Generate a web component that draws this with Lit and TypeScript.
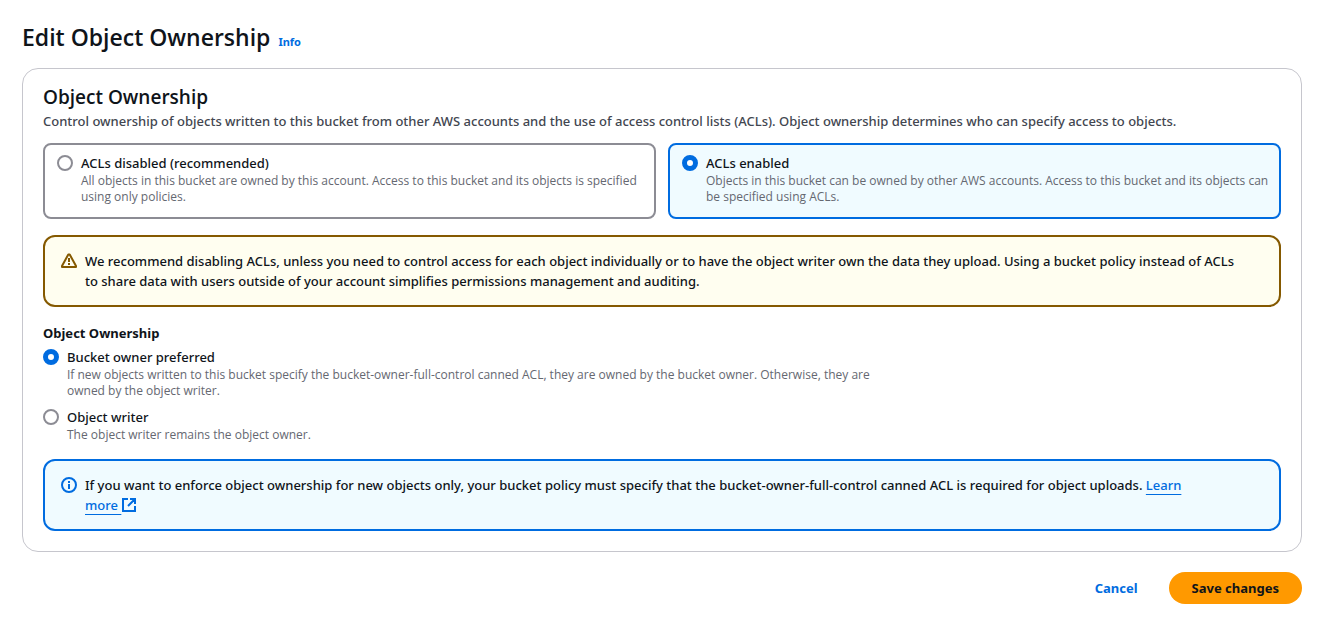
import { LitElement, html, css } from "lit";
import { customElement, state } from "lit/decorators.js";

@customElement("app-root")
class AppRoot extends LitElement {
  @state() private acl = "enabled";
  @state() private owner = "bucket";

  static styles = css`
    :host { display: block; font-family: "Noto Sans", "Open Sans", sans-serif; font-size: 13px; line-height: 20px; color: #0f141a; font-weight: 500; }
    * { box-sizing: border-box; }
    form { padding: 22px 37px 24px 22px; }
    .page-head { display: flex; align-items: baseline; gap: 8px; margin-bottom: 16px; }
    h1 { margin: 0; font-family: "Open Sans", sans-serif; font-size: 23px; line-height: 30px; font-weight: 600; }
    .info { font-size: 11px; line-height: 16px; font-weight: 700; color: #006ce0; text-decoration: none; }
    .card { border: 1px solid #c6c6cd; border-radius: 16px; padding: 16px 20px 20px; }
    h2 { margin: 0; font-family: "Open Sans", sans-serif; font-size: 19px; line-height: 24px; font-weight: 600; }
    .lead { margin: 2px 0 12px; color: #424650; }
    .tiles { display: grid; grid-template-columns: 1fr 1fr; gap: 12px; margin-bottom: 16px; }
    .tile { border: 2px solid #8c8c94; border-radius: 8px; padding: 8px 8px 12px 12px; }
    .tile.on { border-color: #006ce0; background: #f0fbff; }
    .choice { display: flex; gap: 8px; }
    input { appearance: none; flex: none; width: 16px; height: 16px; margin: 2px 0; border: 2px solid #8c8c94; border-radius: 50%; background: #fff; }
    input:checked { border: 5px solid #006ce0; }
    .text { display: block; }
    .desc { display: block; font-family: "Open Sans", sans-serif; font-size: 12px; line-height: 16px; font-weight: 400; color: #656871; }
    .alert { display: flex; gap: 8px; border: 2px solid; border-radius: 12px; padding: 14px 16px; }
    .alert p { margin: 0; color: #0f141a; }
    .warning { border-color: #855900; background: #fffef0; color: #855900; padding-right: 40px; }
    .note { border-color: #006ce0; background: #f0fbff; color: #006ce0; padding-right: 72px; }
    svg { flex: none; width: 16px; height: 16px; fill: none; stroke: currentColor; stroke-width: 2; }
    .alert > svg { margin: 2px 0; }
    fieldset { border: 0; margin: 16px 0; padding: 0; min-width: 0; }
    legend { padding: 0; margin-bottom: 4px; font-weight: 700; }
    .list { display: grid; gap: 8px; max-width: 840px; }
    .link { color: #006ce0; text-decoration: underline; text-underline-offset: 4px; text-decoration-thickness: 1px; }
    .link svg { vertical-align: -3px; }
    .actions { display: flex; justify-content: flex-end; gap: 8px; margin-top: 20px; }
    button { font: inherit; font-weight: 700; border: 0; border-radius: 20px; padding: 6px 23px; background: none; color: #006ce0; }
    .primary { background: #ff9900; color: #0f141a; }
  `;

  private tile(value: string, title: string, desc: string) {
    const on = this.acl === value;
    return html`<label class="tile choice ${on ? "on" : ""}">
      <input type="radio" name="acl" .checked=${on} @change=${() => (this.acl = value)} />
      <span class="text">${title}<span class="desc">${desc}</span></span>
    </label>`;
  }

  private option(value: string, title: string, desc: string) {
    return html`<label class="choice">
      <input type="radio" name="owner" .checked=${this.owner === value} @change=${() => (this.owner = value)} />
      <span class="text">${title}<span class="desc">${desc}</span></span>
    </label>`;
  }

  render() {
    return html`<form @submit=${(e: Event) => e.preventDefault()}>
      <header class="page-head"><h1>Edit Object Ownership</h1><a class="info" href="#">Info</a></header>
      <section class="card">
        <h2>Object Ownership</h2>
        <p class="lead">Control ownership of objects written to this bucket from other AWS accounts and the use of access control lists (ACLs). Object ownership determines who can specify access to objects.</p>
        <div class="tiles">
          ${this.tile("disabled", "ACLs disabled (recommended)", "All objects in this bucket are owned by this account. Access to this bucket and its objects is specified using only policies.")}
          ${this.tile("enabled", "ACLs enabled", "Objects in this bucket can be owned by other AWS accounts. Access to this bucket and its objects can be specified using ACLs.")}
        </div>
        <div class="alert warning">
          <svg viewBox="0 0 16 16"><path stroke-linejoin="round" d="M7.300 1.500H8.700L15 13V14H1V13Z" /><path d="M8 5v4M8 10v2" /></svg>
          <p>We recommend disabling ACLs, unless you need to control access for each object individually or to have the object writer own the data they upload. Using a bucket policy instead of ACLs to share data with users outside of your account simplifies permissions management and auditing.</p>
        </div>
        <fieldset>
          <legend>Object Ownership</legend>
          <div class="list">
            ${this.option("bucket", "Bucket owner preferred", "If new objects written to this bucket specify the bucket-owner-full-control canned ACL, they are owned by the bucket owner. Otherwise, they are owned by the object writer.")}
            ${this.option("writer", "Object writer", "The object writer remains the object owner.")}
          </div>
        </fieldset>
        <div class="alert note">
          <svg viewBox="0 0 16 16"><circle cx="8" cy="8" r="7" /><path d="M8 4v2M8 7v5" /></svg>
          <p>If you want to enforce object ownership for new objects only, your bucket policy must specify that the bucket-owner-full-control canned ACL is required for object uploads. <a class="link" href="#">Learn more <svg viewBox="0 0 16 16"><path d="M7 2H2v12h12V9M9 2h5v5M14 2 7 9" /></svg></a></p>
        </div>
      </section>
      <footer class="actions"><button type="button">Cancel</button><button class="primary" type="submit">Save changes</button></footer>
    </form>`;
  }
}
